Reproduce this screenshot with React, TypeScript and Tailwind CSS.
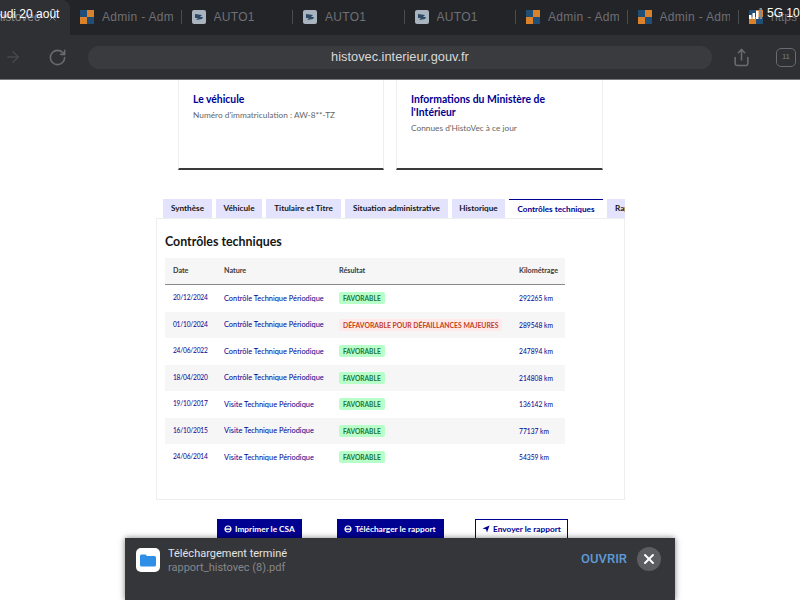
import { RotateCw, ArrowRight, Share, X } from "lucide-react";

const adminTab = { kind: "admin", label: "Admin - Adm" };
const autoTab = { kind: "auto", label: "AUTO1" };
const browserTabs = [adminTab, autoTab, autoTab, autoTab, adminTab, adminTab];

const sections = [
  { label: "Synthèse", width: "w-[49px]" },
  { label: "Véhicule", width: "w-[46px]" },
  { label: "Titulaire et Titre", width: "w-[75px]" },
  { label: "Situation administrative", width: "w-[103px]" },
  { label: "Historique", width: "w-[53px]" },
];

const rows = [
  { date: "20/12/2024", nature: "Contrôle Technique Périodique", ok: true, km: "292265 km" },
  { date: "01/10/2024", nature: "Contrôle Technique Périodique", ok: false, km: "289548 km" },
  { date: "24/06/2022", nature: "Contrôle Technique Périodique", ok: true, km: "247894 km" },
  { date: "18/04/2020", nature: "Contrôle Technique Périodique", ok: true, km: "214808 km" },
  { date: "19/10/2017", nature: "Visite Technique Périodique", ok: true, km: "136142 km" },
  { date: "16/10/2015", nature: "Visite Technique Périodique", ok: true, km: "77137 km" },
  { date: "24/06/2014", nature: "Visite Technique Périodique", ok: true, km: "54359 km" },
];

const AdminIcon = () => (
  <svg width="14" height="14" viewBox="0 0 14 14" className="shrink-0">
    <rect x="0" y="0" width="7" height="7" fill="#1f4f78" />
    <rect x="7" y="0" width="7" height="7" fill="#d9822b" />
    <rect x="0" y="7" width="7" height="7" fill="#d9822b" />
    <rect x="7" y="7" width="7" height="7" fill="#1f4f78" />
  </svg>
);

const AutoIcon = () => (
  <svg width="14" height="14" viewBox="0 0 14 14" className="shrink-0">
    <rect width="14" height="14" rx="2" fill="#a9b4bf" />
    <path d="M3 4l7 1-2 2 3 0-1 2-6 1 2-2-3 0z" fill="#2c4a68" />
  </svg>
);

// round glyph of the two blue buttons
const RoundIcon = () => (
  <svg width="8" height="8" viewBox="0 0 8 8" className="shrink-0">
    <circle cx="4" cy="4" r="3" fill="none" stroke="white" strokeWidth="1.2" />
    <rect x="1" y="3.4" width="6" height="1.4" fill="white" />
  </svg>
);

const SendIcon = () => (
  <svg width="8" height="8" viewBox="0 0 8 8" className="shrink-0">
    <path d="M0.5 3.4L7.5 0.5 5 7.5 4 4.2z" fill="#000091" />
  </svg>
);

const BrowserChrome = () => (
  <div className="h-[80px] shrink-0 border-b border-[#77787a] bg-[#2f3034]">
    <div className="flex h-[35px] overflow-hidden bg-[#232428]">
      <div className="flex w-[70px] shrink-0 items-center justify-between rounded-tr-lg bg-[#2f3034] pb-[1px] pr-3 text-[12px] text-[#8a8b8e]">
        <span className="-ml-1">histovec</span>
        <X size={11} />
      </div>
      <div className="flex pb-[1px] pl-[10px]">
        {browserTabs.map((tab, i) => (
          <div key={i} className="flex w-[111.5px] items-center gap-2 pr-[10px]">
            {tab.kind === "admin" ? <AdminIcon /> : <AutoIcon />}
            <span className="flex-1 overflow-hidden whitespace-nowrap text-[12px] tracking-[0.3px] text-[#6f7074]">{tab.label}</span>
            <span className="h-[14px] w-px bg-[#4b4c50]" />
          </div>
        ))}
        <div className="flex w-[52px] items-center gap-2">
          <AdminIcon />
          <span className="text-[12px] text-[#6f7074]">https</span>
        </div>
      </div>
    </div>
    <div className="flex h-[44px] items-center">
      <ArrowRight size={18} className="ml-[4px] text-[#47484b]" />
      <RotateCw size={19} className="ml-[26px] text-[#6a6b6e]" />
      <div className="ml-[21px] flex h-[23px] w-[624px] items-center justify-center rounded-xl bg-[#3a3b3f] text-[12.8px] text-[#d8d8d9]">
        histovec.interieur.gouv.fr
      </div>
      <Share size={19} className="ml-[20px] text-[#6a6b6e]" />
      <div className="ml-[25px] flex h-[19px] w-[20px] items-center justify-center rounded-[5px] border border-[#6a6b6e] text-[7px] font-bold text-[#6a6b6e]">
        11
      </div>
    </div>
  </div>
);

const InfoCard = ({ title, text }: { title: string; text: string }) => (
  <div className="h-[90px] border-x border-b-2 border-x-[#eeeeee] border-b-[#3a3a3a] pl-[14px] pr-[30px] pt-[13px]">
    <h3 className="text-[10.4px] leading-[13px] font-bold text-[#000091]">{title}</h3>
    <p className="mt-[3px] text-[8.3px] leading-[13px] text-[#666]">{text}</p>
  </div>
);

const Badge = ({ ok }: { ok: boolean }) => (
  <span
    className={
      "inline-block rounded-[2px] px-[4px] leading-[12px] font-bold " +
      (ok ? "bg-[#b8fec9] text-[6.6px] text-[#18753c]" : "bg-[#ffe9e9] text-[6.8px] text-[#c2411c]")
    }
  >
    {ok ? "FAVORABLE" : "DÉFAVORABLE POUR DÉFAILLANCES MAJEURES"}
  </span>
);

const Histovec = () => (
  <div className="flex-1 bg-white font-['Lato',sans-serif]">
    <div className="ml-[178px] grid w-[425px] grid-cols-[206px_207px] gap-3">
      <InfoCard title="Le véhicule" text="Numéro d'immatriculation : AW-8**-TZ" />
      <InfoCard title="Informations du Ministère de l'Intérieur" text="Connues d'HistoVec à ce jour" />
    </div>

    <div className="ml-[163px] mt-[29px] flex h-[19px] w-[462px] items-stretch gap-1 overflow-hidden whitespace-nowrap text-[8.2px] font-bold">
      {sections.map((s) => (
        <div key={s.label} className={"flex shrink-0 items-center justify-center bg-[#e3e3fd] text-[#161616] " + s.width}>{s.label}</div>
      ))}
      <div className="flex w-[94px] shrink-0 items-center justify-center border-t border-[#000091] text-[#000091]">Contrôles techniques</div>
      <div className="flex items-center bg-[#e3e3fd] pl-2 text-[#161616]">Rap</div>
    </div>

    <div className="ml-[156px] h-[282px] w-[469px] border border-[#eeeeee] pl-[8px]">
      <h2 className="mt-[15px] h-[24px] text-[12.4px] font-bold leading-4 text-[#161616]">Contrôles techniques</h2>
      <div className="w-[400px] text-[7.4px]">
        <div className="flex h-[27px] items-center border-b border-[#8a8a8a] bg-[#f6f6f6] text-[7.2px] font-bold text-[#3a3a3a]">
          <span className="w-[59px] pl-2">Date</span>
          <span className="w-[115px]">Nature</span>
          <span className="w-[180px]">Résultat</span>
          <span>Kilométrage</span>
        </div>
        {rows.map((r, i) => (
          <div key={r.date} className={"flex h-[26.5px] items-center text-[#000091] " + (i % 2 ? "bg-[#f6f6f6]" : "")}>
            <span className="w-[59px] pl-2 text-[6.6px] tracking-[-0.2px]">{r.date}</span>
            <span className="w-[115px]">{r.nature}</span>
            <span className="w-[180px]"><Badge ok={r.ok} /></span>
            <span className="text-[6.7px]">{r.km}</span>
          </div>
        ))}
      </div>
    </div>

    <div className="ml-[217px] mt-[19px] flex items-start text-[8.3px] font-bold">
      <button className="flex h-[20px] w-[85px] items-center gap-[3px] bg-[#000091] pl-[7px] text-white">
        <RoundIcon /> Imprimer le CSA
      </button>
      <button className="ml-[35px] flex h-[20px] w-[107px] items-center gap-[3px] bg-[#000091] pl-[7px] text-white">
        <RoundIcon /> Télécharger le rapport
      </button>
      <button className="ml-[31px] flex h-[20px] w-[93px] items-center gap-[3px] border border-[#000091] pl-[6px] text-[#000091]">
        <SendIcon /> Envoyer le rapport
      </button>
    </div>
  </div>
);

const DownloadToast = () => (
  <div className="absolute bottom-0 left-[125px] flex h-[62px] w-[550px] items-start bg-[#35363a] pl-[11px] pr-[14px] pt-[9px] font-['Roboto',sans-serif] shadow-[0_0_6px_rgba(0,0,0,0.5)]">
    <div className="mt-[1px] flex h-[24px] w-[24px] items-center justify-center rounded-[5px] bg-white">
      <svg width="16" height="13" viewBox="0 0 16 13">
        <path d="M0 2a1.5 1.5 0 0 1 1.5-1.5h4L7 2h7.5A1.5 1.5 0 0 1 16 3.5V11a1.5 1.5 0 0 1-1.5 1.5h-13A1.5 1.5 0 0 1 0 11z" fill="#2f8fe6" />
      </svg>
    </div>
    <div className="ml-[8px] flex-1 text-[11px] leading-[14px]">
      <div className="text-[#e4e4e5]">Téléchargement terminé</div>
      <div className="text-[#85868a]">rapport_histovec (8).pdf</div>
    </div>
    <span className="mt-[4px] text-[13px] font-medium leading-[16px] text-[#5f9bd6]">OUVRIR</span>
    <span className="ml-[10px] flex h-[24px] w-[24px] items-center justify-center rounded-full bg-[#5c5d61] text-white">
      <X size={16} strokeWidth={3} />
    </span>
  </div>
);

export default function App() {
  return (
    <div className="relative flex h-[600px] w-[800px] flex-col overflow-hidden font-['Liberation_Sans',sans-serif]">
      <BrowserChrome />
      <Histovec />
      <DownloadToast />
      <span className="absolute left-0 top-[5px] text-[12px] text-white">udi 20 août</span>
      <div className="absolute left-[749px] top-[7px] flex items-center gap-1 text-[12px] leading-[12px] text-white">
        <svg width="14" height="11" viewBox="0 0 14 11">
          <rect x="0" y="7" width="2.5" height="4" fill="white" />
          <rect x="3.5" y="5" width="2.5" height="6" fill="white" />
          <rect x="7" y="3" width="2.5" height="8" fill="white" />
          <rect x="10.5" y="0" width="2.5" height="11" fill="#8a8b8e" />
        </svg>
        <span className="whitespace-nowrap">5G 10</span>
      </div>
    </div>
  );
}
